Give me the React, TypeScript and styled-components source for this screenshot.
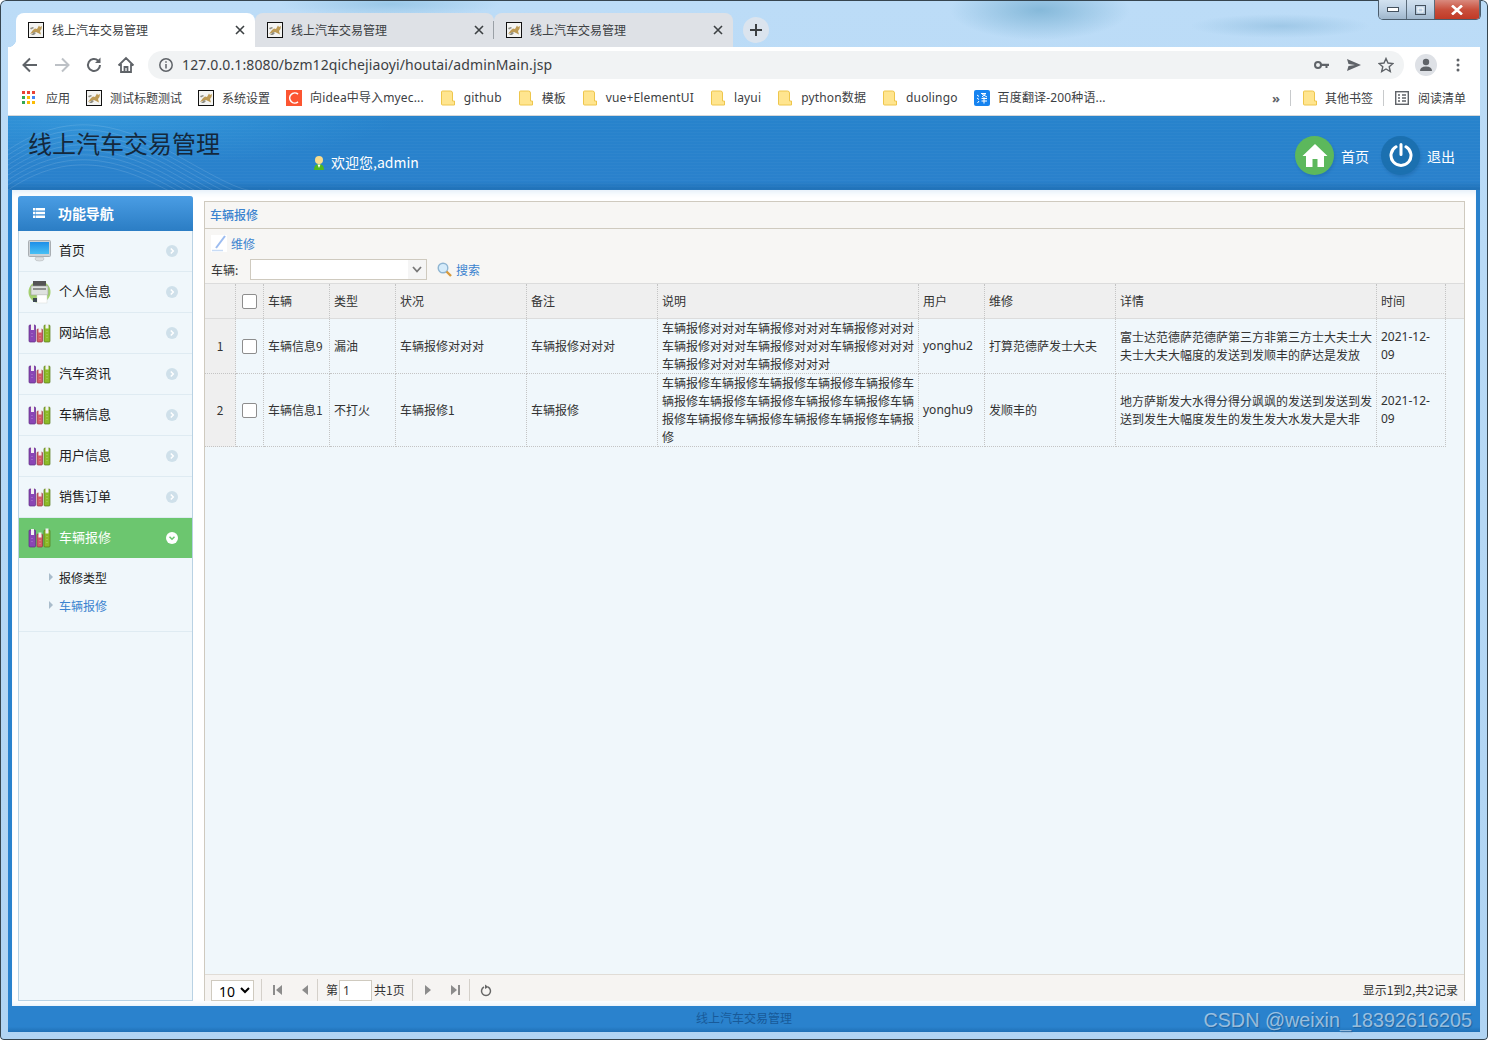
import React from 'react';
import styled, { createGlobalStyle, css } from 'styled-components';

const cjk = `"Noto Sans CJK SC", "Noto Sans", sans-serif`;

const GlobalStyle = createGlobalStyle`
  html, body {
    margin: 0;
    padding: 0;
    background: #fff;
    overflow: hidden;
  }
  * {
    box-sizing: border-box;
  }
`;

const Window = styled.div`
  position: relative;
  width: 1488px;
  height: 1040px;
  padding: 0 8px 8px;
  display: flex;
  flex-direction: column;
  box-shadow: inset 0 0 0 1px #36454f;
  border-radius: 6px 6px 4px 4px;
  font-family: ${cjk};
  font-size: 12px;
  color: #333;
  background:
    radial-gradient(ellipse 110px 14px at 390px 4px, rgba(120, 180, 215, 0.5), transparent),
    radial-gradient(ellipse 90px 30px at 1040px 10px, rgba(110, 170, 205, 0.7), transparent),
    radial-gradient(ellipse 90px 12px at 1280px 26px, rgba(130, 180, 215, 0.5), transparent),
    linear-gradient(180deg, #bcdcf7 0%, #b0d4f3 100%);
`;

const WindowControls = styled.div`
  position: absolute;
  top: 0;
  right: 7px;
  width: 103px;
  height: 20px;
  display: flex;
  border: 1px solid #4b5d6d;
  border-top: none;
  border-radius: 0 0 5px 5px;
  overflow: hidden;
`;

const WindowControl = styled.div<{ $close?: boolean }>`
  flex: ${({ $close }) => ($close ? '1' : '0 0 28px')};
  display: flex;
  align-items: center;
  justify-content: center;
  border-right: 1px solid #5a6b7a;
  background: ${({ $close }) =>
    $close
      ? 'linear-gradient(180deg, #d98a7e 0%, #c9503d 50%, #c13a26 100%)'
      : 'linear-gradient(180deg, #d3e2f0 0%, #bcd0e3 50%, #9fb6cb 100%)'};
  :last-child {
    border-right: none;
  }
`;

const TabStrip = styled.div`
  height: 47px;
  padding-left: 8px;
  display: flex;
  align-items: flex-end;
`;

const Tab = styled.div<{ $active?: boolean; $divider?: boolean }>`
  position: relative;
  width: 239px;
  height: 34px;
  padding: 0 10px 0 12px;
  display: flex;
  align-items: center;
  gap: 8px;
  border-radius: 8px 8px 0 0;
  background: ${({ $active }) => ($active ? '#fff' : '#dee1e6')};
  color: #3c4043;
  ${({ $active }) =>
    $active &&
    css`
      ::before {
        content: '';
        position: absolute;
        left: -8px;
        bottom: 0;
        width: 8px;
        height: 8px;
        background: radial-gradient(circle at 0 0, transparent 8px, #fff 8.5px);
      }
    `}
  ${({ $divider }) =>
    $divider &&
    css`
      ::after {
        content: '';
        position: absolute;
        right: 0;
        top: 8px;
        width: 1px;
        height: 18px;
        background: #9aa0a6;
      }
    `}
`;

const TabTitle = styled.span`
  flex: 1;
  line-height: 16px;
`;

const NewTab = styled.div`
  width: 26px;
  height: 26px;
  margin: 0 0 4px 10px;
  border-radius: 50%;
  background: #dbe4ee;
  display: flex;
  align-items: center;
  justify-content: center;
`;

const Toolbar = styled.div`
  height: 33px;
  padding: 4px 0 1px 6px;
  display: flex;
  align-items: center;
  background: #fff;
`;

const NavButton = styled.div`
  width: 32px;
  height: 28px;
  display: flex;
  align-items: center;
  justify-content: center;
  flex: none;
`;

const Address = styled.div`
  flex: 1;
  height: 28px;
  margin-left: 6px;
  padding: 0 10px 0 10px;
  display: flex;
  align-items: center;
  gap: 8px;
  border-radius: 14px;
  background: #f1f3f4;
`;

const Url = styled.span`
  flex: 1;
  margin-bottom: 2px;
  font-family: "Noto Sans", sans-serif;
  font-size: 14px;
  letter-spacing: 0.12px;
  color: #3c4043;
  white-space: nowrap;
`;

const AddressIcons = styled.div`
  display: flex;
  align-items: center;
  gap: 16px;
`;

const Avatar = styled.div`
  width: 22px;
  height: 22px;
  margin: 0 14px 0 11px;
  border-radius: 50%;
  background: #dee1e6;
  display: flex;
  align-items: center;
  justify-content: center;
  flex: none;
`;

const ToolbarEnd = styled.div`
  width: 14px;
  display: flex;
  justify-content: center;
  flex: none;
  margin-right: 15px;
`;

const BookmarkBar = styled.div`
  height: 36px;
  padding: 0 14px;
  display: flex;
  align-items: center;
  gap: 16px;
  background: #fff;
  border-bottom: 1px solid #d6d8da;
`;

const Bookmark = styled.div<{ $gap?: number }>`
  display: flex;
  align-items: center;
  gap: ${({ $gap }) => $gap ?? 8}px;
  color: #3c4043;
  font-size: 12px;
  line-height: 16px;
  white-space: nowrap;
  flex: none;
`;

const LatinBookmark = styled.span`
  font-family: "Noto Sans", "Noto Sans CJK SC", sans-serif;
  font-size: 12px;
  letter-spacing: 0.15px;
`;

const BookmarkEnd = styled.div`
  margin-left: auto;
  display: flex;
  align-items: center;
`;

const BarSeparator = styled.div`
  width: 1px;
  height: 16px;
  margin: 0 11px 0 10px;
  background: #c8cacc;
`;

const Overflow = styled.span`
  font-family: "Noto Sans", sans-serif;
  font-size: 13px;
  font-weight: 700;
  color: #5f6368;
`;

const Page = styled.div`
  flex: 1;
  display: flex;
  flex-direction: column;
  min-height: 0;
  background: #2a82cd;
`;

const Header = styled.header`
  position: relative;
  height: 74px;
  flex: none;
  display: flex;
  color: #fff;
  overflow: hidden;
  background:
    repeating-linear-gradient(0deg, rgba(255, 255, 255, 0.025) 0 1px, transparent 1px 3px),
    radial-gradient(ellipse 300px 50px at 90px 0, rgba(70, 180, 240, 0.4), transparent),
    linear-gradient(180deg, #2783cc 0%, #2a81cc 88%, #1f70b6 100%);
`;

const HeaderWave = styled.svg`
  position: absolute;
  left: 0;
  top: 0;
`;

const SiteTitle = styled.h1`
  position: relative;
  margin: 0;
  padding: 10px 0 0 20px;
  font-size: 24px;
  line-height: 34px;
  font-weight: 400;
  color: #14283c;
`;

const Welcome = styled.div`
  position: relative;
  margin: 35px 0 0 93px;
  display: flex;
  align-items: center;
  gap: 6px;
  height: 22px;
  font-size: 14px;
`;

const HeaderNav = styled.nav`
  margin: 20px 25px 0 auto;
  display: flex;
  gap: 12px;
  height: 38px;
`;

const HeaderLink = styled.a`
  display: flex;
  align-items: center;
  gap: 7px;
  color: #fff;
  font-size: 14px;
`;

const HeaderLinkText = styled.span`
  margin-top: 2px;
`;

const RoundIcon = styled.div<{ $bg: string }>`
  width: 39px;
  height: 39px;
  border-radius: 50%;
  background: ${({ $bg }) => $bg};
  display: flex;
  align-items: center;
  justify-content: center;
  box-shadow: 1px 2px 3px rgba(0, 40, 80, 0.15);
`;

const Body = styled.div`
  flex: 1;
  min-height: 0;
  margin: 0 4px;
  padding: 6px 11px 5px 6px;
  display: flex;
  gap: 11px;
  background: #fff;
  box-shadow: inset 0 6px 6px -4px rgba(42, 130, 205, 0.15), inset 0 -6px 6px -5px rgba(42, 130, 205, 0.15);
`;

const Sidebar = styled.aside`
  width: 175px;
  flex: none;
  display: flex;
  flex-direction: column;
  background: #f0f7fb;
  border: 1px solid #b9d2e4;
  border-top: none;
  border-radius: 3px 3px 0 0;
`;

const SidebarTitle = styled.div`
  height: 35px;
  margin: 0 -1px;
  padding: 0 0 2px 15px;
  display: flex;
  align-items: center;
  gap: 13px;
  border-radius: 3px 3px 0 0;
  background: linear-gradient(180deg, #4a9de4 0%, #2b7dc4 100%);
  color: #fff;
  font-size: 14px;
  font-weight: 700;
  letter-spacing: -0.1px;
`;

const MenuItem = styled.div<{ $active?: boolean }>`
  height: ${({ $active }) => ($active ? 40 : 41)}px;
  padding: 0 14px 0 9px;
  display: flex;
  align-items: center;
  gap: 8px;
  font-size: 13px;
  color: ${({ $active }) => ($active ? '#fff' : '#222')};
  background: ${({ $active }) => ($active ? '#6cc66f' : 'transparent')};
  border-bottom: ${({ $active }) => ($active ? 'none' : '1px solid #dfebf2')};
`;

const MenuLabel = styled.span`
  flex: 1;
  margin-bottom: 2px;
  line-height: 18px;
`;

const SubMenu = styled.div`
  height: 74px;
  padding-top: 5px;
  border-bottom: 1px solid #dfebf2;
`;

const SubMenuItem = styled.div<{ $current?: boolean }>`
  height: 28px;
  padding-left: 30px;
  display: flex;
  align-items: center;
  gap: 6px;
  font-size: 12px;
  color: ${({ $current }) => ($current ? '#3b83cf' : '#222')};
`;

const SubArrow = styled.i`
  width: 0;
  height: 0;
  border-left: 4px solid #a9bccb;
  border-top: 4px solid transparent;
  border-bottom: 4px solid transparent;
`;

const MainPanel = styled.main`
  flex: 1;
  min-width: 0;
  margin-top: 5px;
  display: flex;
  flex-direction: column;
  border: 1px solid #cfcabf;
  border-bottom: none;
  background: #f0f7fb;
`;

const PanelTitle = styled.div`
  height: 27px;
  flex: none;
  padding: 0 0 2px 5px;
  display: flex;
  align-items: center;
  background: #f7f6f4;
  border-bottom: 1px solid #cfcabf;
  color: #3b83cf;
  font-weight: 500;
`;

const PanelTools = styled.div`
  height: 54px;
  flex: none;
  padding: 4px 6px 0;
  background: #f7f6f4;
`;

const ToolRow = styled.div`
  display: flex;
  align-items: center;
  height: 21px;
`;

const SearchRow = styled(ToolRow)`
  margin-top: 5px;
`;

const ToolLink = styled.a<{ $gap: number }>`
  display: flex;
  align-items: center;
  gap: ${({ $gap }) => $gap}px;
  color: #3b83cf;
`;

const FilterLabel = styled.label`
  width: 39px;
  color: #333;
`;

const FilterBox = styled.div`
  width: 177px;
  height: 21px;
  margin-right: 10px;
  display: flex;
  border: 1px solid #cfcabf;
  background: #fff;
`;

const FilterSelect = styled.select`
  flex: 1;
  min-width: 0;
  appearance: none;
  border: none;
  background: transparent;
  font-family: inherit;
`;

const FilterArrow = styled.span`
  width: 18px;
  display: flex;
  align-items: center;
  justify-content: center;
  background: #f5f5f5;
`;

const Grid = styled.table`
  width: 1241px;
  table-layout: fixed;
  border-collapse: separate;
  border-spacing: 0;
`;

const GridWrap = styled.div`
  flex: 1;
  min-height: 0;
  background: #f0f7fb;
`;

const HeadBar = styled.div`
  background: #efefef;
  border-top: 1px solid #dcdcdc;
  border-bottom: 1px solid #dcdcdc;
`;

const GridCol = styled.col<{ $w: number }>`
  width: ${({ $w }) => $w}px;
`;

const cellBorder = css`
  border-right: 1px dotted #c4c4c4;
  padding: 0 4px;
  line-height: 18px;
  font-weight: 400;
  text-align: left;
  color: #333;
`;

const HeadCell = styled.th`
  ${cellBorder}
  height: 34px;
  background: #efefef;
`;

const BodyCell = styled.td`
  ${cellBorder}
  border-bottom: 1px dotted #c4c4c4;
  word-break: break-all;
`;

const TimeCell = styled(BodyCell)`
  word-break: normal;
  font-family: "Noto Sans", sans-serif;
`;

const UserCell = styled(BodyCell)`
  font-family: "Noto Sans", sans-serif;
`;

const NumberCell = styled(BodyCell)`
  background: #efefef;
  text-align: center;
  padding: 0;
`;

const CheckCell = styled(BodyCell)`
  text-align: center;
  padding: 0;
`;

const HeadCheckCell = styled(HeadCell)`
  text-align: center;
  padding: 0;
`;

const RowBox = styled.input.attrs({ type: 'checkbox' })`
  appearance: none;
  display: block;
  width: 15px;
  height: 15px;
  margin: 0 auto;
  background: #fff;
  border: 1px solid #8d8d8d;
  border-radius: 2px;
`;

const Pager = styled.footer`
  height: 27px;
  flex: none;
  padding: 0 6px;
  display: flex;
  align-items: center;
  background: #f6f4f2;
  border-top: 1px solid #e0dcd6;
`;

const PageSize = styled.select`
  width: 43px;
  height: 21px;
  margin-top: 4px;
  border: 1px solid #cfcabf;
  background: #fff;
  font-size: 14px;
  font-family: "Noto Sans", sans-serif;
  padding-left: 3px;
`;

const PagerSep = styled.i<{ $left?: number; $right?: number }>`
  width: 1px;
  height: 22px;
  margin: 4px ${({ $right }) => $right ?? 0}px 0 ${({ $left }) => $left ?? 0}px;
  background: #d4d0ca;
`;

const PagerIcon = styled.svg<{ $right?: number }>`
  flex: none;
  margin-top: 4px;
  margin-right: ${({ $right }) => $right ?? 0}px;
`;

const PageInput = styled.input`
  width: 33px;
  height: 21px;
  margin: 4px 2px 0 1px;
  padding: 0 3px;
  border: 1px solid #cfcabf;
  background: #fff;
  font-size: 12px;
  font-family: "Noto Sans", sans-serif;
  color: #333;
`;

const PagerText = styled.span`
  margin-top: 2px;
`;

const PagerSummary = styled.span`
  margin: 2px 0 0 auto;
`;

const Footer = styled.div`
  position: relative;
  height: 26px;
  flex: none;
  padding-bottom: 4px;
  display: flex;
  align-items: center;
  justify-content: center;
  color: #185a99;
  font-size: 12px;
  background: linear-gradient(180deg, #2a82cd 0%, #2a82cd 80%, #1f70b6 100%);
`;

const Watermark = styled.span`
  position: absolute;
  right: 8px;
  top: 1px;
  font-family: "Liberation Sans", sans-serif;
  font-size: 19.8px;
  line-height: 26px;
  color: rgba(255, 255, 255, 0.55);
  text-shadow: 1px 1px 1px rgba(0, 30, 60, 0.3);
`;

const TomcatIcon = () => (
  <svg width="16" height="16" viewBox="0 0 16 16">
    <rect x="0.5" y="0.5" width="15" height="15" fill="#f4f4f2" stroke="#111" />
    <path d="M2 12 L5 8 L7 6.5 L9 7 L11 3.5 L12 5 L14 4 L13.5 7 L12 9 L13 12.5 L10 11 L8 10 L5 11 Z" fill="#bd9a55" />
    <path d="M3 13 L6 10 L8 11 L6 13 Z M2 6 L5 5 L6 6 L3 7.5 Z" fill="#8f8f86" />
  </svg>
);

const FolderIcon = () => (
  <svg width="16" height="16" viewBox="0 0 16 16">
    <path
      d="M2.5 1 H10.5 Q12.5 1 12.5 3 V11 H14.5 V15 H2.5 Q1.5 15 1.5 14 V2 Q1.5 1 2.5 1 Z"
      fill="#ffe58f"
      stroke="#eec64c"
    />
  </svg>
);

const AppsIcon = () => (
  <svg width="14" height="14" viewBox="0 0 14 14">
    {[0, 5, 10].map((y, row) =>
      [0, 5, 10].map((x, col) => (
        <rect
          key={`${x}-${y}`}
          x={x}
          y={y}
          width="3"
          height="3"
          fill={[['#ea4335', '#ea4335', '#ea4335'], ['#34a853', '#fbbc05', '#4285f4'], ['#34a853', '#fbbc05', '#fbbc05']][row][col]}
        />
      ))
    )}
  </svg>
);

const CIcon = () => (
  <svg width="16" height="16" viewBox="0 0 16 16">
    <rect width="16" height="16" fill="#fc5531" />
    <path d="M12 4.2 A5 5 0 1 0 12 11.8" fill="none" stroke="#fff" strokeWidth="1.6" />
  </svg>
);

const TranslateIcon = () => (
  <svg width="16" height="16" viewBox="0 0 16 16">
    <rect width="16" height="16" rx="2" fill="#1683f0" />
    <path d="M3 5 L5 6.5 M3 8 L5 9.5 M5 11 L3.5 13 M7 3.5 H12 L8 7 M8 4 L13 7 M7.5 8.5 H13 M10 7 V13.5 M7.5 11 H13" stroke="#fff" strokeWidth="1" fill="none" />
  </svg>
);

const ReadingIcon = () => (
  <svg width="14" height="14" viewBox="0 0 14 14" fill="none" stroke="#5f6368" strokeWidth="1.4">
    <rect x="0.7" y="0.7" width="12.6" height="12.6" />
    <path d="M3 4 H5 M7 4 H11 M3 7 H5 M7 7 H11 M3 10 H5 M7 10 H11" />
  </svg>
);

const MonitorIcon = () => (
  <svg width="23" height="22" viewBox="0 0 23 22">
    <defs>
      <linearGradient id="screen" x1="0" y1="0" x2="0" y2="1">
        <stop offset="0" stopColor="#1f8fe8" />
        <stop offset="1" stopColor="#49c0f4" />
      </linearGradient>
    </defs>
    <rect x="0.5" y="0.5" width="22" height="16" rx="1" fill="#cdd2d6" stroke="#a9aeb2" />
    <rect x="2" y="2" width="19" height="12" fill="url(#screen)" />
    <path d="M8 17 H15 L16 19 Q16 21 11.5 21 Q7 21 7 19 Z" fill="#dde0e2" stroke="#b6babd" strokeWidth="0.6" />
  </svg>
);

const PrinterIcon = () => (
  <svg width="23" height="24" viewBox="0 0 23 24">
    <circle cx="11.5" cy="12" r="11" fill="#a4d06f" />
    <rect x="5" y="1" width="13" height="6" fill="#555" />
    <rect x="3" y="6" width="17" height="9" fill="#dfe2df" stroke="#9a9d9a" strokeWidth="0.6" />
    <rect x="5" y="8" width="13" height="2" fill="#8d908d" />
    <rect x="9" y="15" width="10" height="8" fill="#fff" stroke="#d6d9d6" strokeWidth="0.5" />
    <rect x="5" y="18" width="4" height="4" fill="#3f4a52" />
  </svg>
);

const BooksIcon = () => (
  <svg width="23" height="20" viewBox="0 0 23 20">
    <rect x="1" y="2" width="6.5" height="17" rx="1" fill="#8a45b5" stroke="#5d2b82" strokeWidth="0.7" />
    <rect x="3" y="1" width="3" height="6" fill="#f2f2f2" />
    <rect x="9" y="6" width="5.5" height="13" rx="1" fill="#d45c68" stroke="#94303c" strokeWidth="0.7" />
    <rect x="10.5" y="4.5" width="3" height="5" fill="#f2f2f2" />
    <rect x="16" y="2" width="6" height="17" rx="1" fill="#8dbb28" stroke="#56751a" strokeWidth="0.7" />
    <rect x="17.5" y="0.5" width="3" height="5" fill="#f2f2f2" />
    <path d="M19 8 V16 M12 12 V16 M4 10 V16" stroke="rgba(255,255,255,0.35)" strokeWidth="1" strokeDasharray="1 2" />
  </svg>
);

const RoundChevron = ({ open }: { open?: boolean }) => (
  <svg width="12" height="12" viewBox="0 0 12 12">
    <circle cx="6" cy="6" r="6" fill={open ? '#fff' : '#cfe0ea'} />
    <path
      d={open ? 'M3.5 4.8 L6 7.3 L8.5 4.8' : 'M4.8 3.5 L7.3 6 L4.8 8.5'}
      fill="none"
      stroke={open ? '#6cc66f' : '#fff'}
      strokeWidth="1.5"
    />
  </svg>
);

const PagerTriangle = ({ dir, bar, right }: { dir: 'left' | 'right'; bar?: boolean; right?: number }) => (
  <PagerIcon width="10" height="12" viewBox="0 0 10 12" fill="#8c8c8c" $right={right}>
    {dir === 'left' ? <path d="M9 1 V11 L3 6 Z" /> : <path d="M1 1 V11 L7 6 Z" />}
    {bar && (dir === 'left' ? <rect x="0" y="1" width="2" height="10" /> : <rect x="8" y="1" width="2" height="10" />)}
  </PagerIcon>
);

const TabClose = () => (
  <svg width="10" height="10" viewBox="0 0 10 10">
    <path d="M1 1 L9 9 M9 1 L1 9" stroke="#3c4043" strokeWidth="1.6" />
  </svg>
);

const columns = [31, 28, 66, 66, 131, 131, 261, 66, 131, 261, 69];

const rows = [
  {
    id: 1,
    car: '车辆信息9',
    kind: '漏油',
    state: '车辆报修对对对',
    note: '车辆报修对对对',
    desc: '车辆报修对对对'.repeat(8),
    user: 'yonghu2',
    repair: '打算范德萨发士大夫',
    detail: '富士达范德萨范德萨第三方非第三方士大夫士大夫士大夫大幅度的发送到发顺丰的萨达是发放',
    time: '2021-12-09',
  },
  {
    id: 2,
    car: '车辆信息1',
    kind: '不打火',
    state: '车辆报修1',
    note: '车辆报修',
    desc: '车辆报修'.repeat(16),
    user: 'yonghu9',
    repair: '发顺丰的',
    detail: '地方萨斯发大水得分得分飒飒的发送到发送到发送到发生大幅度发生的发生发大水发大是大非',
    time: '2021-12-09',
  },
];

const menus = ['网站信息', '汽车资讯', '车辆信息', '用户信息', '销售订单'];

const App = () => {
  return (
    <>
      <GlobalStyle />
      <Window>
        <WindowControls>
          <WindowControl>
            <svg width="12" height="5" viewBox="0 0 12 5">
              <rect x="0.5" y="0.5" width="11" height="4" fill="#fff" stroke="#44515e" />
            </svg>
          </WindowControl>
          <WindowControl>
            <svg width="11" height="10" viewBox="0 0 11 10" fill="none" stroke="#44515e">
              <rect x="0.5" y="0.5" width="10" height="9" />
              <rect x="3" y="3" width="5" height="4" stroke="#fff" />
            </svg>
          </WindowControl>
          <WindowControl $close>
            <svg width="12" height="10" viewBox="0 0 12 10">
              <path d="M1 0.5 L11 9.5 M11 0.5 L1 9.5" stroke="#fff" strokeWidth="2.6" />
            </svg>
          </WindowControl>
        </WindowControls>

        <TabStrip>
          <Tab $active>
            <TomcatIcon />
            <TabTitle>线上汽车交易管理</TabTitle>
            <TabClose />
          </Tab>
          <Tab $divider>
            <TomcatIcon />
            <TabTitle>线上汽车交易管理</TabTitle>
            <TabClose />
          </Tab>
          <Tab>
            <TomcatIcon />
            <TabTitle>线上汽车交易管理</TabTitle>
            <TabClose />
          </Tab>
          <NewTab>
            <svg width="14" height="14" viewBox="0 0 14 14">
              <path d="M7 1 V13 M1 7 H13" stroke="#3c4043" strokeWidth="2" />
            </svg>
          </NewTab>
        </TabStrip>

        <Toolbar>
          <NavButton>
            <svg width="18" height="18" viewBox="0 0 18 18" fill="none" stroke="#5f6368" strokeWidth="2">
              <path d="M16 9 H3 M9 2.5 L2.5 9 L9 15.5" />
            </svg>
          </NavButton>
          <NavButton>
            <svg width="18" height="18" viewBox="0 0 18 18" fill="none" stroke="#bdc1c6" strokeWidth="2">
              <path d="M2 9 H15 M9 2.5 L15.5 9 L9 15.5" />
            </svg>
          </NavButton>
          <NavButton>
            <svg width="18" height="18" viewBox="0 0 18 18" fill="none">
              <path d="M15 9 A6 6 0 1 1 13.2 4.7" stroke="#5f6368" strokeWidth="2" />
              <path d="M15.5 1.5 V7 H10 Z" fill="#5f6368" />
            </svg>
          </NavButton>
          <NavButton>
            <svg width="18" height="18" viewBox="0 0 18 18" fill="none" stroke="#5f6368" strokeWidth="1.8">
              <path d="M1.5 9.5 L9 2 L16.5 9.5 M4 8 V16 H14 V8 M7.5 16 V11 H10.5 V16" />
            </svg>
          </NavButton>
          <Address>
            <svg width="16" height="16" viewBox="0 0 16 16" fill="none" stroke="#5f6368" strokeWidth="1.5">
              <circle cx="8" cy="8" r="6.2" />
              <path d="M8 7 V11.5 M8 4.3 V5.8" />
            </svg>
            <Url>127.0.0.1:8080/bzm12qichejiaoyi/houtai/adminMain.jsp</Url>
            <AddressIcons>
              <svg width="16" height="10" viewBox="0 0 16 10">
                <circle cx="4" cy="5" r="3" fill="none" stroke="#5f6368" strokeWidth="2" />
                <path d="M7 3.8 H15 V6 H13.5 V8 H11.5 V6 H7 Z" fill="#5f6368" />
              </svg>
              <svg width="16" height="14" viewBox="0 0 16 14">
                <path d="M1 1 L15 7 L1 13 L2.5 8 L9 7 L2.5 6 Z" fill="#5f6368" />
              </svg>
              <svg width="16" height="16" viewBox="0 0 16 16">
                <path d="M8 1.5 L10 6 L15 6.5 L11.2 9.7 L12.3 14.5 L8 12 L3.7 14.5 L4.8 9.7 L1 6.5 L6 6 Z" fill="none" stroke="#5f6368" strokeWidth="1.4" />
              </svg>
            </AddressIcons>
          </Address>
          <Avatar>
            <svg width="14" height="14" viewBox="0 0 14 14" fill="#5f6368">
              <circle cx="7" cy="4" r="3.2" />
              <path d="M1 13 Q1 8.5 7 8.5 Q13 8.5 13 13 Z" />
            </svg>
          </Avatar>
          <ToolbarEnd>
            <svg width="4" height="14" viewBox="0 0 4 14" fill="#5f6368">
              <circle cx="2" cy="2" r="1.5" />
              <circle cx="2" cy="7" r="1.5" />
              <circle cx="2" cy="12" r="1.5" />
            </svg>
          </ToolbarEnd>
        </Toolbar>

        <BookmarkBar>
          <Bookmark $gap={10}>
            <AppsIcon />
            应用
          </Bookmark>
          <Bookmark>
            <TomcatIcon />
            测试标题测试
          </Bookmark>
          <Bookmark>
            <TomcatIcon />
            系统设置
          </Bookmark>
          <Bookmark>
            <CIcon />
            <LatinBookmark>向idea中导入myec...</LatinBookmark>
          </Bookmark>
          <Bookmark>
            <FolderIcon />
            <LatinBookmark>github</LatinBookmark>
          </Bookmark>
          <Bookmark>
            <FolderIcon />
            模板
          </Bookmark>
          <Bookmark>
            <FolderIcon />
            <LatinBookmark>vue+ElementUI</LatinBookmark>
          </Bookmark>
          <Bookmark>
            <FolderIcon />
            <LatinBookmark>layui</LatinBookmark>
          </Bookmark>
          <Bookmark>
            <FolderIcon />
            <LatinBookmark>python数据</LatinBookmark>
          </Bookmark>
          <Bookmark>
            <FolderIcon />
            <LatinBookmark>duolingo</LatinBookmark>
          </Bookmark>
          <Bookmark>
            <TranslateIcon />
            <LatinBookmark>百度翻译-200种语...</LatinBookmark>
          </Bookmark>
          <BookmarkEnd>
            <Overflow>»</Overflow>
            <BarSeparator />
            <Bookmark $gap={7}>
              <FolderIcon />
              其他书签
            </Bookmark>
            <BarSeparator />
            <Bookmark $gap={9}>
              <ReadingIcon />
              阅读清单
            </Bookmark>
          </BookmarkEnd>
        </BookmarkBar>

        <Page>
          <Header>
            <HeaderWave width="280" height="74" viewBox="0 0 280 74" fill="none" stroke="rgba(255,255,255,0.12)">
              {[0, 5, 10, 15, 20, 25, 30, 35, 40].map((o) => (
                <path key={o} d={`M0 ${34 + o} C60 ${-6 + o} 110 ${6 + o} 170 ${40 + o} S240 ${78 + o} 262 ${74 + o}`} />
              ))}
            </HeaderWave>
            <SiteTitle>线上汽车交易管理</SiteTitle>
            <Welcome>
              <svg width="12" height="15" viewBox="0 0 12 15">
                <path d="M1 15 Q1 9 6 9 Q11 9 11 15 Z" fill="#4fb81f" />
                <circle cx="6" cy="5" r="4" fill="#f9dc8c" />
                <path d="M4.5 9.5 H7.5 L6 13 Z" fill="#fff" />
              </svg>
              欢迎您,admin
            </Welcome>
            <HeaderNav>
              <HeaderLink>
                <RoundIcon $bg="#5cb85c">
                  <svg width="26" height="24" viewBox="0 0 26 24" fill="#fff">
                    <path d="M13 1 L25.5 13 L22 13 V24 H15.5 V16 H10.5 V24 H4 V13 H0.5 Z" />
                  </svg>
                </RoundIcon>
                <HeaderLinkText>首页</HeaderLinkText>
              </HeaderLink>
              <HeaderLink>
                <RoundIcon $bg="#1b70b0">
                  <svg width="24" height="24" viewBox="0 0 24 24" fill="none" stroke="#fff" strokeWidth="3" strokeLinecap="round">
                    <path d="M7 3.8 A10 10 0 1 0 17 3.8 M12 1.5 V11.5" />
                  </svg>
                </RoundIcon>
                <HeaderLinkText>退出</HeaderLinkText>
              </HeaderLink>
            </HeaderNav>
          </Header>

          <Body>
            <Sidebar>
              <SidebarTitle>
                <svg width="12" height="10" viewBox="0 0 12 10" fill="#fff">
                  <path d="M0 0 H2.5 V2.4 H0 Z M3 0 H12 V2.4 H3 Z M0 3.8 H2.5 V6.2 H0 Z M3 3.8 H12 V6.2 H3 Z M0 7.6 H2.5 V10 H0 Z M3 7.6 H12 V10 H3 Z" />
                </svg>
                功能导航
              </SidebarTitle>
              <MenuItem>
                <MonitorIcon />
                <MenuLabel>首页</MenuLabel>
                <RoundChevron />
              </MenuItem>
              <MenuItem>
                <PrinterIcon />
                <MenuLabel>个人信息</MenuLabel>
                <RoundChevron />
              </MenuItem>
              {menus.map((label) => (
                <MenuItem key={label}>
                  <BooksIcon />
                  <MenuLabel>{label}</MenuLabel>
                  <RoundChevron />
                </MenuItem>
              ))}
              <MenuItem $active>
                <BooksIcon />
                <MenuLabel>车辆报修</MenuLabel>
                <RoundChevron open />
              </MenuItem>
              <SubMenu>
                <SubMenuItem>
                  <SubArrow />
                  报修类型
                </SubMenuItem>
                <SubMenuItem $current>
                  <SubArrow />
                  车辆报修
                </SubMenuItem>
              </SubMenu>
            </Sidebar>

            <MainPanel>
              <PanelTitle>车辆报修</PanelTitle>
              <PanelTools>
                <ToolRow>
                  <ToolLink $gap={4}>
                    <svg width="16" height="17" viewBox="0 0 16 17" fill="none">
                      <rect width="16" height="17" fill="#fff" />
                      <path d="M14 1 L5 13" stroke="#9cbcf0" strokeWidth="2" />
                      <path d="M1 15.5 H12" stroke="#c9dcf5" strokeWidth="1.5" />
                    </svg>
                    维修
                  </ToolLink>
                </ToolRow>
                <SearchRow>
                  <FilterLabel>车辆:</FilterLabel>
                  <FilterBox>
                    <FilterSelect />
                    <FilterArrow>
                      <svg width="10" height="7" viewBox="0 0 10 7" fill="none">
                        <path d="M1 1 L5 5.5 L9 1" stroke="#777" strokeWidth="1.8" />
                      </svg>
                    </FilterArrow>
                  </FilterBox>
                  <ToolLink $gap={4}>
                    <svg width="15" height="15" viewBox="0 0 15 15" fill="none">
                      <circle cx="6" cy="6" r="4.8" fill="#d5ebfa" stroke="#8fb5d2" strokeWidth="1.4" />
                      <path d="M9.5 9.5 L14 14" stroke="#d99a3c" strokeWidth="2.4" />
                    </svg>
                    搜索
                  </ToolLink>
                </SearchRow>
              </PanelTools>
              <GridWrap>
                <HeadBar>
                  <Grid>
                    <colgroup>
                      {columns.map((w, i) => (
                        <GridCol key={i} $w={w} />
                      ))}
                    </colgroup>
                    <thead>
                      <tr>
                        <HeadCell />
                        <HeadCheckCell>
                          <RowBox />
                        </HeadCheckCell>
                        <HeadCell>车辆</HeadCell>
                        <HeadCell>类型</HeadCell>
                        <HeadCell>状况</HeadCell>
                        <HeadCell>备注</HeadCell>
                        <HeadCell>说明</HeadCell>
                        <HeadCell>用户</HeadCell>
                        <HeadCell>维修</HeadCell>
                        <HeadCell>详情</HeadCell>
                        <HeadCell>时间</HeadCell>
                      </tr>
                    </thead>
                  </Grid>
                </HeadBar>
                <Grid>
                  <colgroup>
                    {columns.map((w, i) => (
                      <GridCol key={i} $w={w} />
                    ))}
                  </colgroup>
                  <tbody>
                    {rows.map((row) => (
                      <tr key={row.id}>
                        <NumberCell>{row.id}</NumberCell>
                        <CheckCell>
                          <RowBox />
                        </CheckCell>
                        <BodyCell>{row.car}</BodyCell>
                        <BodyCell>{row.kind}</BodyCell>
                        <BodyCell>{row.state}</BodyCell>
                        <BodyCell>{row.note}</BodyCell>
                        <BodyCell>{row.desc}</BodyCell>
                        <UserCell>{row.user}</UserCell>
                        <BodyCell>{row.repair}</BodyCell>
                        <BodyCell>{row.detail}</BodyCell>
                        <TimeCell>{row.time}</TimeCell>
                      </tr>
                    ))}
                  </tbody>
                </Grid>
              </GridWrap>
              <Pager>
                <PageSize defaultValue="10">
                  <option>10</option>
                </PageSize>
                <PagerSep $left={7} $right={11} />
                <PagerTriangle dir="left" bar right={16} />
                <PagerTriangle dir="left" />
                <PagerSep $left={8} $right={8} />
                <PagerText>第</PagerText>
                <PageInput defaultValue="1" />
                <PagerText>共1页</PagerText>
                <PagerSep $left={7} $right={11} />
                <PagerTriangle dir="right" right={16} />
                <PagerTriangle dir="right" bar />
                <PagerSep $left={9} $right={10} />
                <PagerIcon width="12" height="13" viewBox="0 0 12 13" fill="none">
                  <path d="M8 3 A4.5 4.5 0 1 1 4 3" stroke="#666" strokeWidth="1.5" />
                  <path d="M5 0.5 L8.5 3 L5 5 Z" fill="#666" />
                </PagerIcon>
                <PagerSummary>显示1到2,共2记录</PagerSummary>
              </Pager>
            </MainPanel>
          </Body>

          <Footer>
            线上汽车交易管理
            <Watermark>CSDN @weixin_18392616205</Watermark>
          </Footer>
        </Page>
      </Window>
    </>
  );
};

export default App;
